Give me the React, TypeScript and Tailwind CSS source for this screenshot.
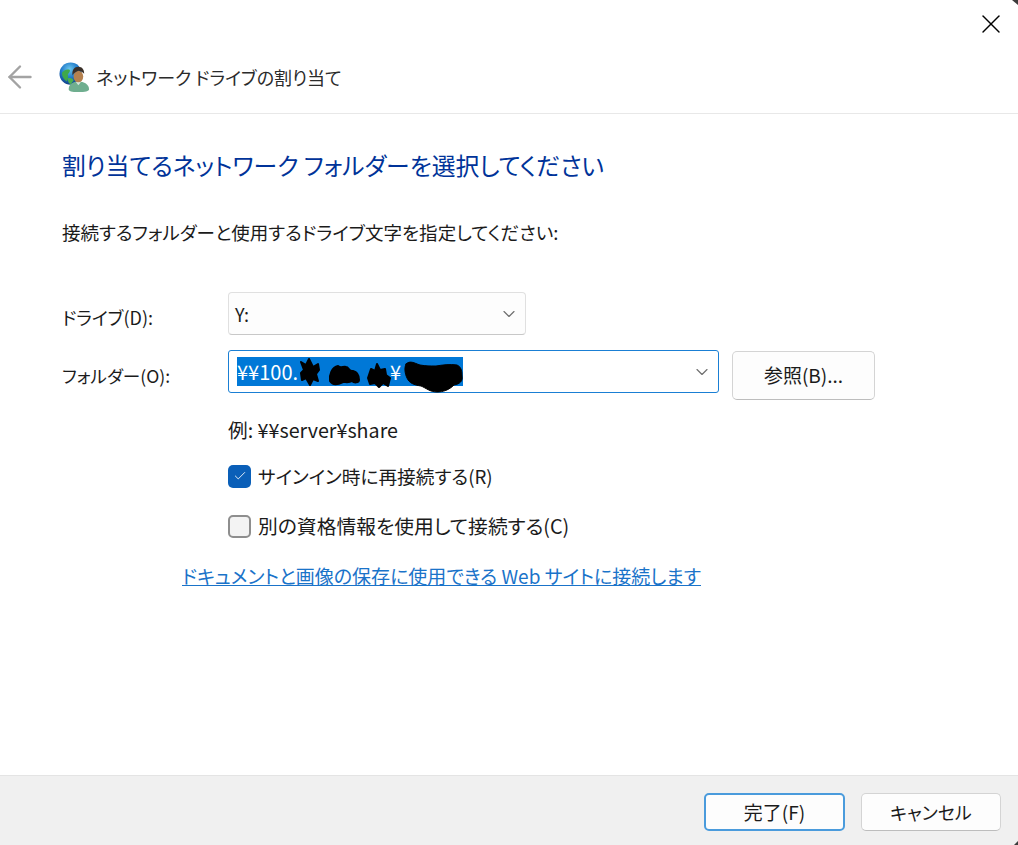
import { ArrowLeft, Check, ChevronDown, X } from "lucide-react";

const font = "font-['Noto_Sans_CJK_JP','Noto_Sans',sans-serif] [font-feature-settings:'palt']";

const NetworkIcon = () => (
  <svg width="31" height="31" viewBox="0 0 32 32" className="shrink-0 blur-[0.4px]">
    <defs>
      <radialGradient id="globe" cx="45%" cy="30%" r="70%">
        <stop offset="0%" stopColor="#6cc8ee" />
        <stop offset="55%" stopColor="#1f78c8" />
        <stop offset="100%" stopColor="#123f86" />
      </radialGradient>
    </defs>
    <circle cx="12" cy="12" r="11.5" fill="url(#globe)" />
    <path d="M3 11c3-3 5-4 8-3 1 2-1 3-2 5 1 3 0 5-1 7-3-2-5-5-5-9z" fill="#3fa84a" />
    <path d="M9 17c3-1 5 0 6 2l-3 4c-2-1-3-3-3-6z" fill="#4bb04d" />
    <path d="M10 28c0-5 4-8 10-8s11 3 11 8c0 2-4 3-11 3s-10-1-10-3z" fill="#6fae8f" />
    <path d="M17 20l3 4 3-4z" fill="#d5e6dc" />
    <ellipse cx="20" cy="15" rx="5" ry="6" fill="#b5814f" />
    <path d="M14 14c-1-6 2-9 6-9s6 3 6 7c-2-2-4-3-6-3-2 1-5 2-6 5z" fill="#3a3029" />
  </svg>
);

const Scribble = () => (
  <svg width="226" height="29" viewBox="0 0 226 29" className="absolute left-0 top-0 overflow-visible pointer-events-none">
    <g fill="#000" stroke="#000" strokeLinecap="round" strokeLinejoin="round">
      <path d="M64 5l5 3 3-6 4 8 5-3 1 6-3 4 2 7-5-2-3 6-4-7-4 2-1-7 3-3z" strokeWidth="2" />
      <path d="M93 24c-1-6 2-14 8-15 3 3 5 0 8 1 3 0 3 5 7 4 4 1 6 5 6 9 0 3-5 3-7 1-3 2-6 1-9 1-4 2-10 4-13-1z" strokeWidth="2" />
      <path d="M131 21l3-9 4 2 2-7 3 6 5-1 1 6 4 3-2 8-5-3-4 4-4-4-5 1z" strokeWidth="2" />
      <path d="M169 7c4-4 8-1 14 1 6 1 10 1 16 1 6-1 14-2 21-1 5 2 5 8 5 11 1 5-2 8-8 9-5 5-11 7-17 7-7 0-11-4-16-6-7-1-12-3-14-8-2-4-3-10-1-14z" />
    </g>
  </svg>
);

export default function App() {
  return (
    <div className={`relative flex h-[845px] w-[1018px] flex-col overflow-hidden bg-white text-[#1b1b1b] ${font}`}>
      <header className="flex h-[114px] flex-col border-b border-[#e8e8e8]">
        <div className="flex h-12 justify-end pr-[11px] pt-[8px]">
          <X size={32} strokeWidth={1.05} className="text-black" />
        </div>
        <div className="flex items-center pl-[2px] pt-[11px]">
          <ArrowLeft size={36} strokeWidth={1.6} className="text-[#a3a3a3]" />
          <div className="ml-[21px] flex items-center gap-[6px]">
            <NetworkIcon />
            <span className="text-[18px] leading-8 text-[#2b2b2b]">ネットワーク ドライブの割り当て</span>
          </div>
        </div>
      </header>

      <main className="flex flex-1 flex-col pl-[62px]">
        <h1 className="mt-[32px] text-[23.8px] leading-[38px] text-[#003399]">割り当てるネットワーク フォルダーを選択してください</h1>
        <p className="mt-[34px] text-[18.55px] leading-7">接続するフォルダーと使用するドライブ文字を指定してください:</p>

        <div className="mt-[46px] flex items-center">
          <label className="w-[166px] pt-[7px] text-[18px] leading-7">ドライブ(D):</label>
          <div className="flex h-[43px] w-[298px] items-center justify-between rounded-[4px] border border-[#e0e0e0] border-b-[#c8c8c8] bg-[#fdfdfd] pl-[6px] pr-[6px] text-[18px]">
            <span className="pt-[2px]">Y:</span>
            <ChevronDown size={20} strokeWidth={1.4} className="text-[#707070]" />
          </div>
        </div>

        <div className="mt-[15px] flex items-start">
          <label className="mt-[12px] w-[166px] text-[17.6px] leading-7">フォルダー(O):</label>
          <div className="flex h-[43px] w-[491px] items-center justify-between rounded-[3px] border border-[#1a7fd4] pl-[8px] pr-[6px]">
            <div className="relative flex h-[29px] w-[226px] items-center bg-[#0078d7] text-[20px] text-white">
              <span>¥¥100.</span>
              <span className="ml-[92px]">¥</span>
              <Scribble />
            </div>
            <ChevronDown size={20} strokeWidth={1.4} className="text-[#707070]" />
          </div>
          <button className="ml-[13px] mt-[1px] h-[49px] w-[143px] rounded-[5px] border border-[#d4d4d4] border-b-[#bdbdbd] bg-[#fdfdfd] text-[19px]">参照(B)...</button>
        </div>

        <div className="ml-[166px] flex flex-col">
          <p className="mt-[16px] text-[19.7px] leading-7">例: ¥¥server¥share</p>
          <div className="mt-[18px] flex items-center gap-[7px]">
            <span className="flex h-[23px] w-[23px] items-center justify-center rounded-[5px] bg-[#0a5fb8]">
              <Check size={14} strokeWidth={1.5} className="text-white" />
            </span>
            <span className="text-[18.7px] leading-7">サインイン時に再接続する(R)</span>
          </div>
          <div className="mt-[22px] flex items-center gap-[7px]">
            <span className="h-[23px] w-[23px] rounded-[5px] border-2 border-[#8e8e8e] bg-[#f3f3f3]" />
            <span className="text-[19.8px] leading-7">別の資格情報を使用して接続する(C)</span>
          </div>
        </div>

        <a className="ml-[120px] mt-[22px] w-fit text-[19px] leading-7 text-[#1a73c9] underline">ドキュメントと画像の保存に使用できる Web サイトに接続します</a>
      </main>

      <footer className="flex h-[70px] items-start justify-end gap-[16px] border-t border-[#e4e4e4] bg-[#f0f0f0] pr-[17px] pt-[17px]">
        <button className="h-[38px] w-[141px] rounded-[5px] border-2 border-[#4a9bdc] bg-[#fdfdfd] text-[19px]">完了(F)</button>
        <button className="h-[38px] w-[140px] rounded-[5px] border border-[#d4d4d4] border-b-[#bdbdbd] bg-[#fdfdfd] text-[18px]">キャンセル</button>
      </footer>

      {/* window corners */}
      <svg width="6" height="5" viewBox="0 0 6 5" className="absolute right-0 top-0"><path d="M0 0h6v5z" fill="#3c3c3c" /></svg>
      <svg width="4" height="4" viewBox="0 0 4 4" className="absolute bottom-0 right-0"><path d="M4 0v4H0z" fill="#3c3c3c" /></svg>
    </div>
  );
}
